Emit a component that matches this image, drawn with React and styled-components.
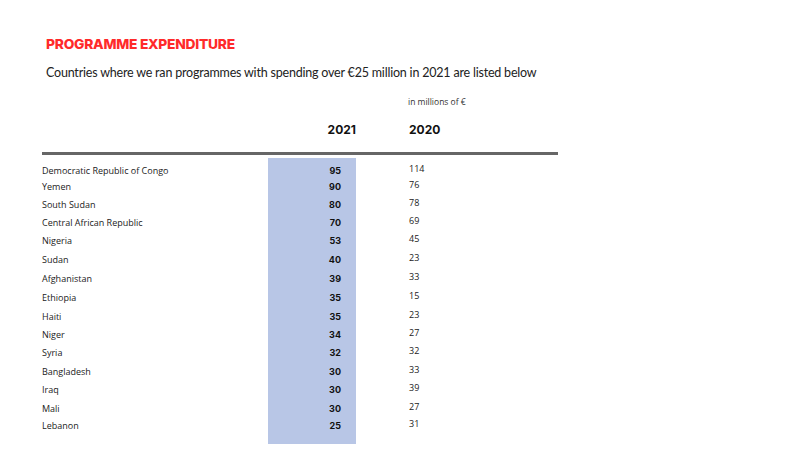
import React from "react";
import styled, { createGlobalStyle } from "styled-components";

const Global = createGlobalStyle`
  html, body { margin: 0; padding: 0; background: #ffffff; }
  body { width: 800px; height: 450px; overflow: hidden; }
`;

const Page = styled.div`
  width: 800px;
  height: 450px;
  box-sizing: border-box;
  padding: 35px 0 0 42px;
  font-family: "Open Sans", "Noto Sans", sans-serif;
  color: #1e1e1e;
`;

const Title = styled.h1`
  margin: 0 0 0 4px;
  font-family: Inter, "Noto Sans", sans-serif;
  font-weight: 800;
  font-size: 13.8px;
  line-height: 18px;
  letter-spacing: -0.25px;
  color: #ff2a2a;
`;

const Subtitle = styled.p`
  margin: 11px 0 0 4px;
  font-family: Lato, "Noto Sans", sans-serif;
  font-size: 12.5px;
  line-height: 18px;
  letter-spacing: -0.2px;
  color: #222;
`;

const Unit = styled.div`
  margin: 14px 0 0 366px;
  font-size: 8.5px;
  line-height: 12px;
  color: #333;
`;

const HeaderRow = styled.div`
  display: grid;
  grid-template-columns: 314px 1fr;
  margin-top: 14px;
  width: 516px;
  font-family: Inter, sans-serif;
  font-weight: 700;
  font-size: 12px;
  line-height: 16px;
  color: #111;
`;

const YearA = styled.div`
  text-align: right;
`;

const YearB = styled.div`
  padding-left: 53px;
`;

const Rule = styled.div`
  width: 516px;
  height: 3px;
  margin-top: 14px;
  background: #666666;
`;

const Table = styled.div`
  display: grid;
  grid-template-columns: 226px 88px 1fr;
  margin-top: 3px;
  width: 516px;
`;

const Name = styled.div`
  height: ${(p) => p.$h}px;
  display: flex;
  align-items: center;
  font-size: 9px;
  color: #222;
`;

const Value = styled.div`
  height: ${(p) => p.$h}px;
  box-sizing: border-box;
  padding-right: 15px;
  display: flex;
  align-items: center;
  justify-content: flex-end;
  background: #b8c6e6;
  font-family: Inter, sans-serif;
  font-weight: 700;
  font-size: 9px;
  color: #111;
`;

const Prev = styled.div`
  height: ${(p) => p.$h}px;
  box-sizing: border-box;
  padding: 0 0 4px 53px;
  display: flex;
  align-items: center;
  font-size: 9px;
  color: #222;
`;

const rows = [
  ["Democratic Republic of Congo", 95, 114, 14.5],
  ["Yemen", 90, 76, 17.5],
  ["South Sudan", 80, 78, 18],
  ["Central African Republic", 70, 69, 18],
  ["Nigeria", 53, 45, 19],
  ["Sudan", 40, 23, 18.5],
  ["Afghanistan", 39, 33, 19.5],
  ["Ethiopia", 35, 15, 19],
  ["Haiti", 35, 23, 18],
  ["Niger", 34, 27, 18.5],
  ["Syria", 32, 32, 18],
  ["Bangladesh", 30, 33, 19],
  ["Iraq", 30, 39, 18],
  ["Mali", 30, 27, 19.5],
  ["Lebanon", 25, 31, 14],
];

export default function App() {
  return (
    <Page>
      <Global />
      <Title>PROGRAMME EXPENDITURE</Title>
      <Subtitle>
        Countries where we ran programmes with spending over €25 million in 2021 are listed below
      </Subtitle>
      <Unit>in millions of €</Unit>
      <HeaderRow>
        <YearA>2021</YearA>
        <YearB>2020</YearB>
      </HeaderRow>
      <Rule />
      <Table>
        <Name $h={5} />
        <Value $h={5} />
        <Prev $h={5} />
        {rows.map(([n, a, b, h]) => (
          <React.Fragment key={n}>
            <Name $h={h}>{n}</Name>
            <Value $h={h}>{a}</Value>
            <Prev $h={h}>{b}</Prev>
          </React.Fragment>
        ))}
        <Name $h={12} />
        <Value $h={12} />
        <Prev $h={12} />
      </Table>
    </Page>
  );
}
